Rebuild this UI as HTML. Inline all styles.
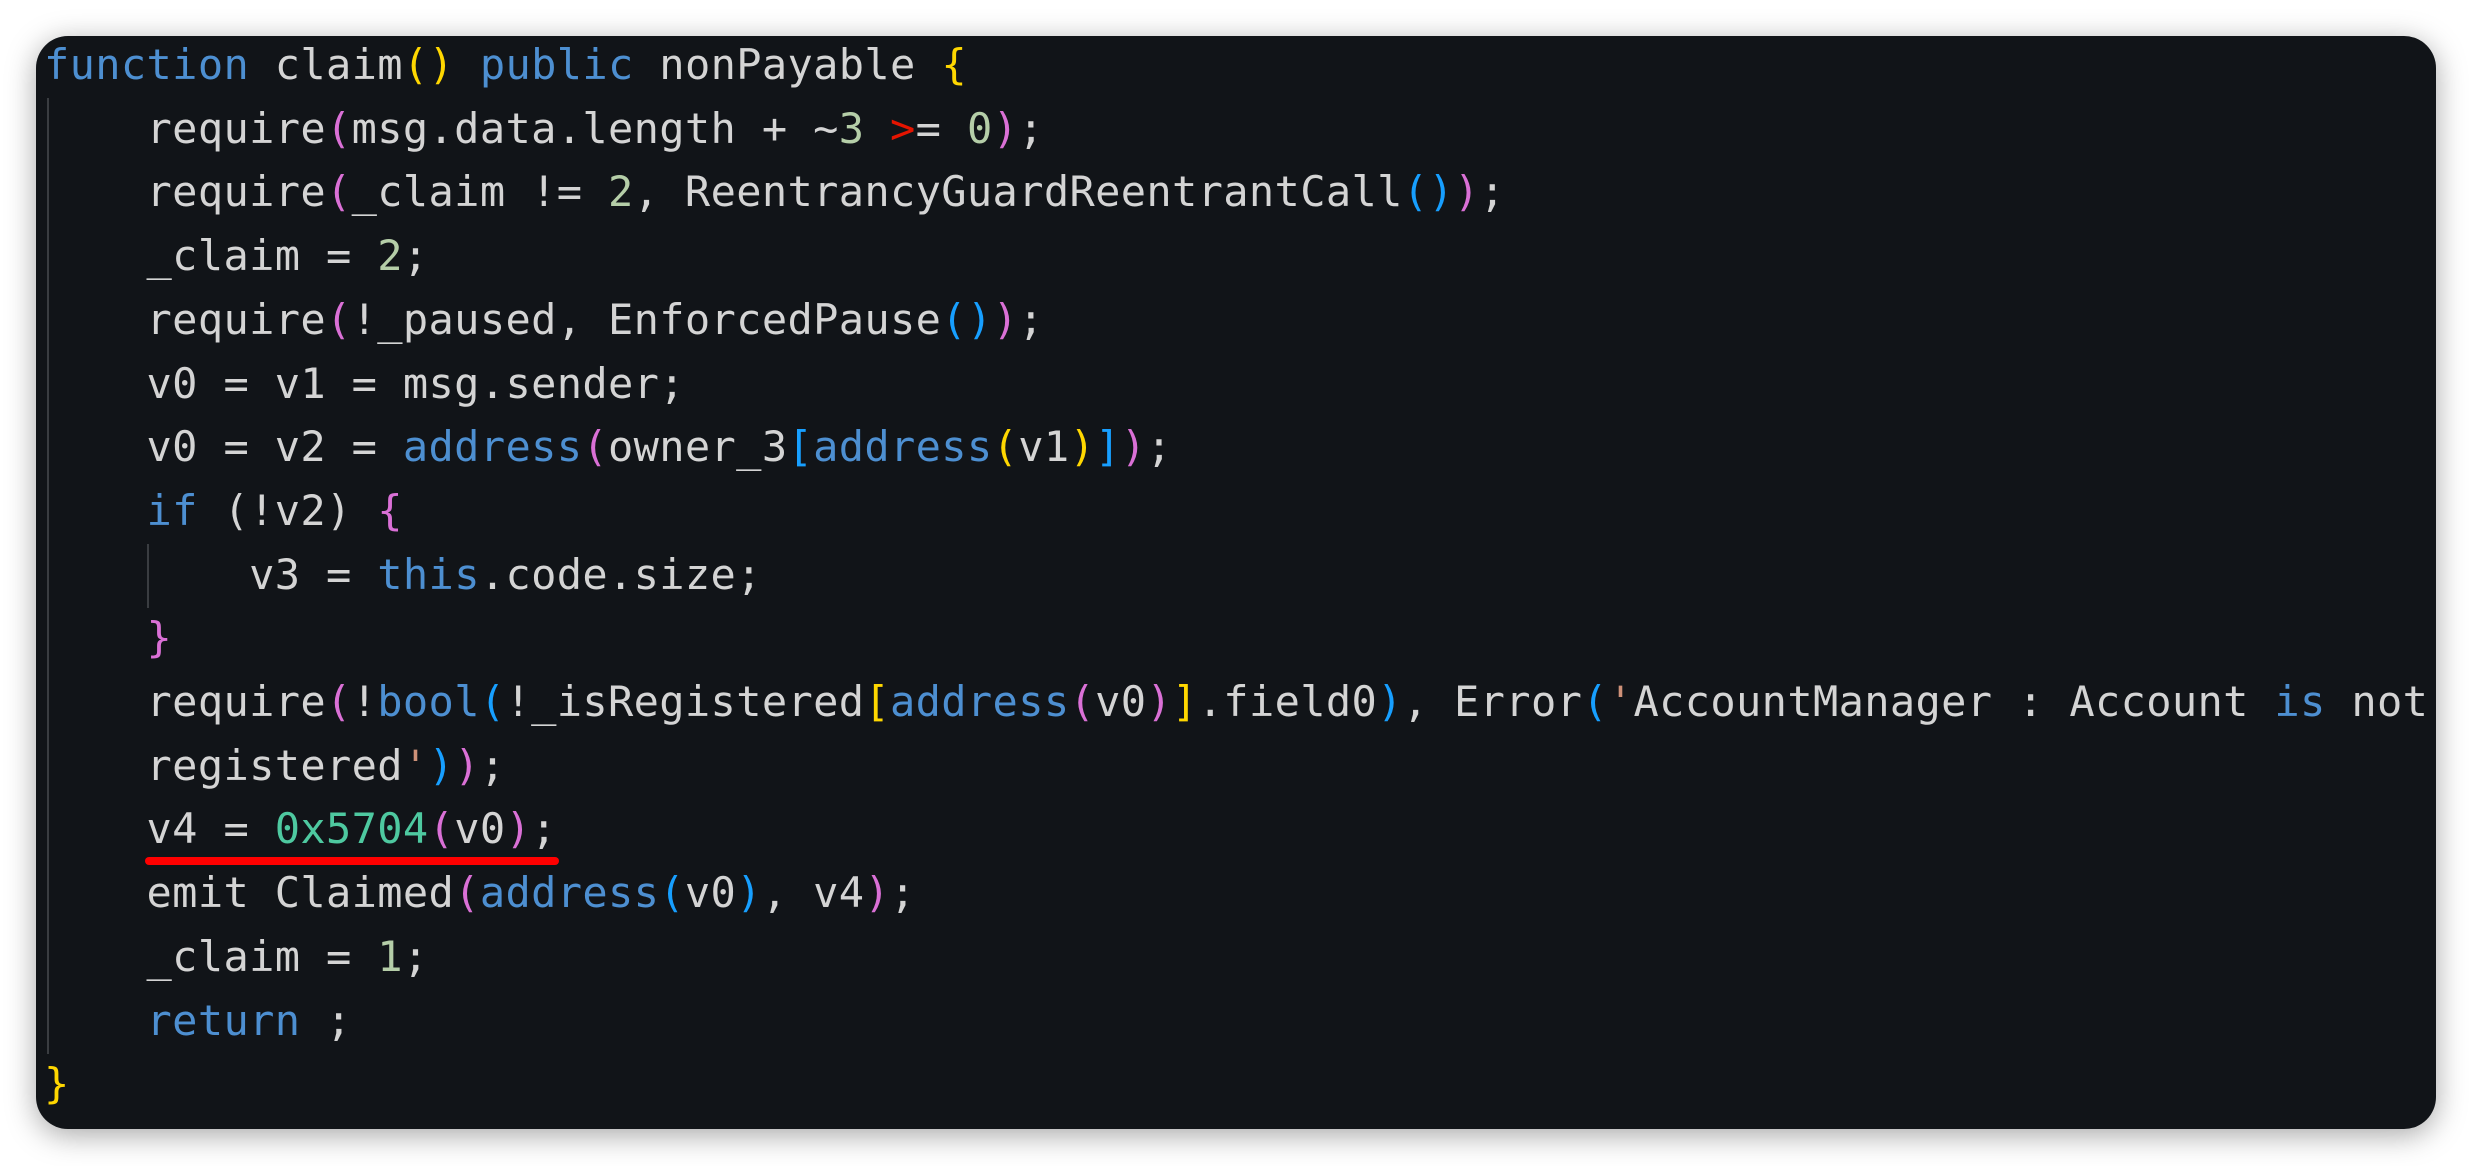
<!DOCTYPE html>
<html><head><meta charset="utf-8"><style>
html,body{margin:0;padding:0;background:#fff;width:2472px;height:1166px;overflow:hidden}
.card{position:absolute;left:36px;top:36px;width:2400px;height:1093px;background:#111418;border-radius:32px;box-shadow:0 6px 30px rgba(0,0,0,0.35);overflow:hidden}
pre{position:absolute;left:8px;top:-3px;margin:0;font-family:"DejaVu Sans Mono","Liberation Mono",monospace;font-size:42px;letter-spacing:0.35px;line-height:63.7px;color:#d4d4d4;white-space:pre}
.k{color:#4d8fd1}.y{color:#ffd700}.m{color:#da70d6}.b{color:#179fff}.n{color:#b5cea8}.r{color:#e51400}.h{color:#4ec9a0}.s{color:#ce9178}
.g{position:absolute;width:2px;background:#3a3d41}
.ul{position:absolute;left:145px;top:857px;width:414px;height:8px;background:#f00;border-radius:4px}
</style></head><body>
<div class="card">
<div class="g" style="left:11px;top:62px;height:956px"></div>
<div class="g" style="left:111px;top:508px;height:64px"></div>
<pre><span class="k">function</span> claim<span class="y">()</span> <span class="k">public</span> nonPayable <span class="y">{</span>
    require<span class="m">(</span>msg.data.length + ~<span class="n">3</span> <span class="r">&gt;</span>= <span class="n">0</span><span class="m">)</span>;
    require<span class="m">(</span>_claim != <span class="n">2</span>, ReentrancyGuardReentrantCall<span class="b">()</span><span class="m">)</span>;
    _claim = <span class="n">2</span>;
    require<span class="m">(</span>!_paused, EnforcedPause<span class="b">()</span><span class="m">)</span>;
    v0 = v1 = msg.sender;
    v0 = v2 = <span class="k">address</span><span class="m">(</span>owner_3<span class="b">[</span><span class="k">address</span><span class="y">(</span>v1<span class="y">)</span><span class="b">]</span><span class="m">)</span>;
    <span class="k">if</span> (!v2) <span class="m">{</span>
        v3 = <span class="k">this</span>.code.size;
    <span class="m">}</span>
    require<span class="m">(</span>!<span class="k">bool</span><span class="b">(</span>!_isRegistered<span class="y">[</span><span class="k">address</span><span class="m">(</span>v0<span class="m">)</span><span class="y">]</span>.field0<span class="b">)</span>, Error<span class="b">(</span><span class="s">'</span>AccountManager : Account <span class="k">is</span> not
    registered<span class="s">'</span><span class="b">)</span><span class="m">)</span>;
    v4 = <span class="h">0x5704</span><span class="m">(</span>v0<span class="m">)</span>;
    emit Claimed<span class="m">(</span><span class="k">address</span><span class="b">(</span>v0<span class="b">)</span>, v4<span class="m">)</span>;
    _claim = <span class="n">1</span>;
    <span class="k">return</span> ;
<span class="y">}</span></pre>
</div>
<div class="ul"></div>
</body></html>
